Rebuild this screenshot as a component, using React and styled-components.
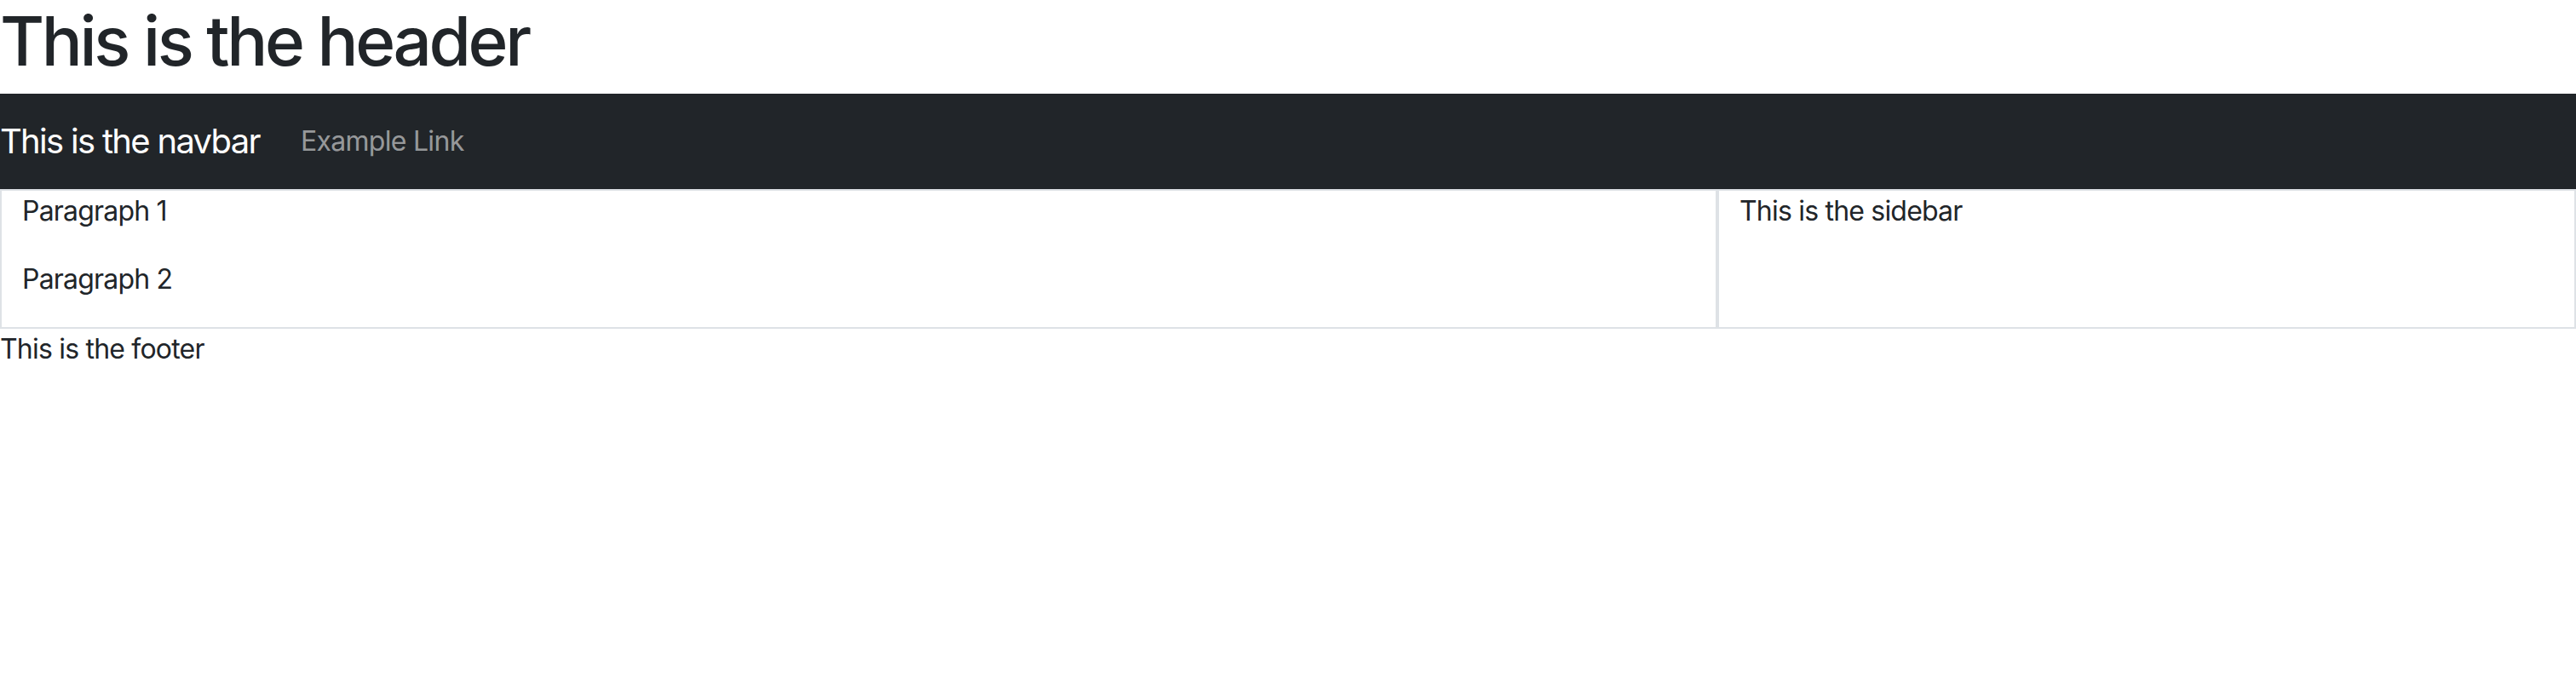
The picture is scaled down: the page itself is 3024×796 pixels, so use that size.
import React from 'react'
import styled, { createGlobalStyle } from 'styled-components'

const GlobalStyle = createGlobalStyle`
  body {
    margin: 0;
    font-family: Inter, 'Liberation Sans', sans-serif;
    font-size: 32px;
    line-height: 1.5;
    letter-spacing: -0.8px;
    color: #212529;
    background: #fff;
  }
`

const Header = styled.h1`
  margin: 0 0 14px;
  font-size: 80px;
  font-weight: 500;
  line-height: 96px;
  letter-spacing: -3.4px;
`

const Navbar = styled.nav`
  display: flex;
  align-items: center;
  padding: 16px 0;
  background-color: #212529;
`

const Brand = styled.span`
  padding: 10px 0;
  margin-right: 32px;
  font-size: 40px;
  line-height: 60px;
  color: #fff;
  letter-spacing: -1.7px;
`

const NavLink = styled.a`
  padding: 16px;
  color: rgba(255, 255, 255, 0.55);
  text-decoration: none;
  letter-spacing: -0.7px;
`

const Row = styled.div`
  display: grid;
  grid-template-columns: 2fr 1fr;
`

const Column = styled.div`
  border: 2px solid #dee2e6;
  padding: 0 24px;
`

const Paragraph = styled.p`
  margin: 0 0 32px;
`

const Footer = styled.footer``

const App = () => {
  return (
    <>
      <GlobalStyle />
      <Header>This is the header</Header>
      <Navbar>
        <Brand>This is the navbar</Brand>
        <NavLink href="#">Example Link</NavLink>
      </Navbar>
      <Row>
        <Column>
          <Paragraph>Paragraph 1</Paragraph>
          <Paragraph>Paragraph 2</Paragraph>
        </Column>
        <Column>This is the sidebar</Column>
      </Row>
      <Footer>This is the footer</Footer>
    </>
  )
}

export default App
